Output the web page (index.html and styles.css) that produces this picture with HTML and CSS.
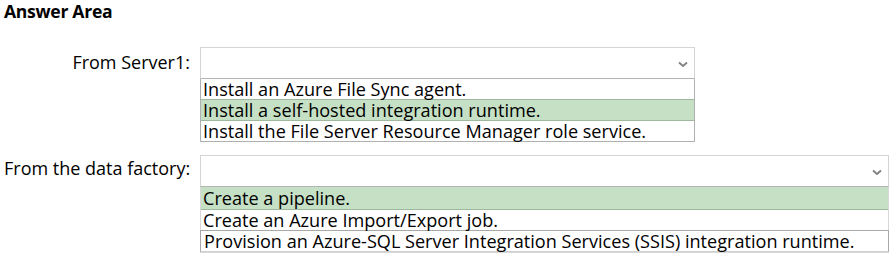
FILE: index.html
```html
<!DOCTYPE html>
<html>
<head>
<meta charset="utf-8">
<link rel="stylesheet" href="styles.css">
</head>
<body>
<div class="page">
  <h1 class="title">Answer Area</h1>
  <div class="grid">
    <div class="label l1">From Server1:</div>
    <div class="field f1">
      <div class="select"><span class="chev"><svg width="10" height="7" viewBox="0 0 10 7"><path d="M1 1.5 L5 5 L9 1.5" fill="none" stroke="#808080" stroke-width="1.8"/></svg></span></div>
      <div class="list">
        <div class="opt"><span class="txt">Install an Azure File Sync agent.</span></div>
        <div class="opt sel"><span class="txt">Install a self-hosted integration runtime.</span></div>
        <div class="opt"><span class="txt">Install the File Server Resource Manager role service.</span></div>
      </div>
    </div>
    <div class="label l2">From the data factory:</div>
    <div class="field f2">
      <div class="select"><span class="chev"><svg width="10" height="7" viewBox="0 0 10 7"><path d="M1 1.5 L5 5 L9 1.5" fill="none" stroke="#808080" stroke-width="1.8"/></svg></span></div>
      <div class="list">
        <div class="opt sel"><span class="txt">Create a pipeline.</span></div>
        <div class="opt"><span class="txt">Create an Azure Import/Export job.</span></div>
        <div class="opt"><span class="txt">Provision an Azure-SQL Server Integration Services (SSIS) integration runtime.</span></div>
      </div>
    </div>
  </div>
</div>
</body>
</html>
```
FILE: styles.css
```css
html, body {
  margin: 0;
  padding: 0;
  background: #ffffff;
}
body {
  font-family: "Open Sans", "Noto Sans", sans-serif;
  color: #000;
  width: 893px;
  height: 259px;
  overflow: hidden;
}
.page {
  padding: 0 0 0 4px;
}
.title {
  margin: 0;
  font-size: 17.6px;
  font-weight: 700;
  line-height: 22px;
  letter-spacing: -0.3px;
}
.grid {
  display: grid;
  grid-template-columns: 186px auto;
  column-gap: 10px;
  margin-top: 25px;
  row-gap: 13px;
  align-items: start;
}
.label {
  text-align: right;
  font-size: 18px;
  line-height: 22px;
  white-space: nowrap;
}
.l1 { padding-top: 4px; }
.l2 { padding-top: 2px; }
.field {
  display: flex;
  flex-direction: column;
}
.f1 { width: 495px; }
.f2 { width: 689px; }
.select {
  height: 30px;
  border: 1px solid #d4d4d4;
  border-bottom-color: #b4b4b4;
  display: flex;
  justify-content: flex-end;
  align-items: center;
  padding-right: 6px;
  background: #fff;
}
.chev {
  display: flex;
  margin-top: 3px;
}
.list {
  border: 1px solid #b0b0b0;
  border-top: none;
}
.f2 .list {
  border-color: #d8d8d8;
}
.opt {
  font-size: 18.1px;
  height: 20px;
  padding-left: 2px;
  white-space: nowrap;
  border-top: 1px solid #b0b0b0;
}
.txt {
  display: inline-block;
  height: 20px;
  line-height: 20px;
  vertical-align: top;
}
.opt:first-child {
  border-top: none;
}
.opt.sel {
  background: #c6e0c5;
  border-top: 1px solid #9fb99e;
  border-bottom: 1px solid #9fb99e;
}
.f1 .opt.sel + .opt { border-top: none; }
.f2 .opt.sel { border-top: none; height: 22px; }
.f2 .opt.sel .txt { height: 22px; line-height: 22px; }
.f2 .opt.sel + .opt { border-top: none; }
.f2 .opt:last-child {
  border: 1px solid #a8a8a8;
  border-bottom: 1px solid #cfcfcf;
  margin: 0 -1px 0 -1px;
  padding-left: 3px;
}
```
